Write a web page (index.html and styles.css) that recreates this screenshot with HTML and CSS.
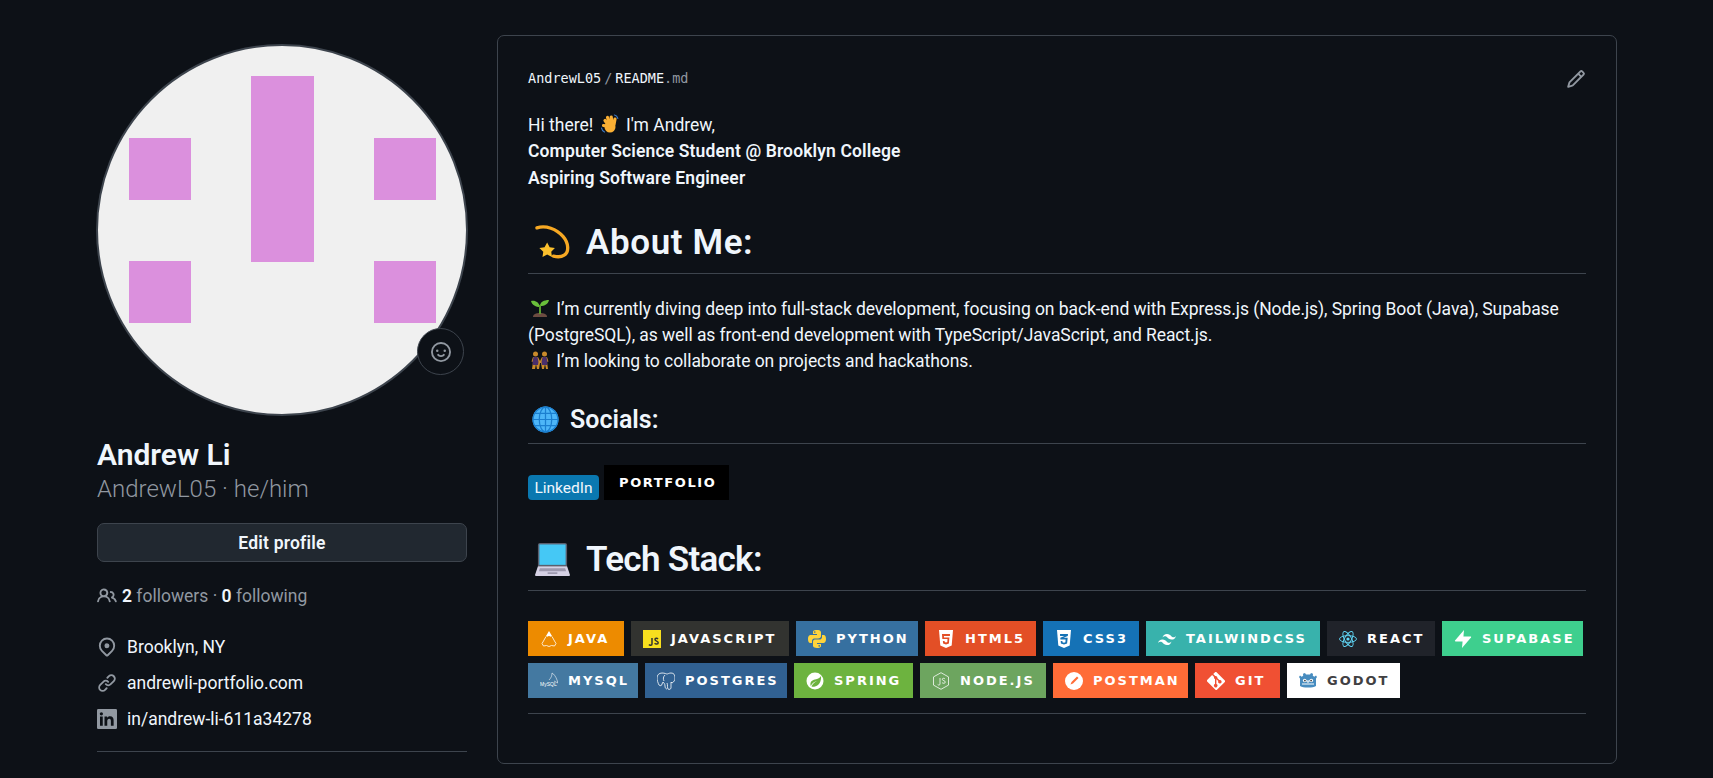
FILE: index.html
```html
<!DOCTYPE html>
<html>
<head>
    <title>AndrewL05</title>
    <link rel="stylesheet" href="styles.css">
</head>
<body>
    <div class="page">
        <aside class="sidebar">
            <div class="avatar-wrap">
                <svg class="avatar" viewBox="0 0 370 370">
                    <circle cx="185" cy="185" r="185" fill="#f0f0f0"/>
                    <g fill="#db90dd">
                        <rect x="32" y="93" width="62" height="62"/>
                        <rect x="154" y="31" width="63" height="186"/>
                        <rect x="277" y="93" width="62" height="62"/>
                        <rect x="32" y="216" width="62" height="62"/>
                        <rect x="277" y="216" width="62" height="62"/>
                    </g>
                </svg>
                <div class="status">
                    <svg viewBox="0 0 16 16" width="20" height="20" fill="#9198a1"><path d="M8 0a8 8 0 1 1 0 16A8 8 0 0 1 8 0ZM1.5 8a6.5 6.5 0 1 0 13 0 6.5 6.5 0 0 0-13 0Zm3.82 1.636a.75.75 0 0 1 1.038.175l.007.009c.103.118.22.222.35.31.264.178.683.37 1.285.37.602 0 1.02-.192 1.285-.371.13-.088.247-.192.35-.31l.007-.008a.75.75 0 0 1 1.222.87l-.022-.015c.02.013.021.015.021.015v.001l-.001.002-.002.003-.005.007-.014.019a2.066 2.066 0 0 1-.184.213c-.16.166-.338.316-.53.445-.63.418-1.37.638-2.127.629-.946 0-1.652-.308-2.126-.63a3.331 3.331 0 0 1-.715-.657l-.014-.02-.005-.006-.002-.003v-.002h-.001l.613-.432-.614.43a.75.75 0 0 1 .183-1.044ZM12 7a1 1 0 1 1-2 0 1 1 0 0 1 2 0ZM5 8a1 1 0 1 1 0-2 1 1 0 0 1 0 2Z"/></svg>
                </div>
            </div>
            <h1 class="name">Andrew Li</h1>
            <div class="login">AndrewL05 · he/him</div>
            <button class="edit-btn">Edit profile</button>
            <div class="follow">
                <svg viewBox="0 0 16 16" width="20" height="20" fill="#9198a1"><path d="M2 5.5a3.5 3.5 0 1 1 5.898 2.549 5.508 5.508 0 0 1 3.034 4.084.75.75 0 1 1-1.482.235 4 4 0 0 0-7.9 0 .75.75 0 0 1-1.482-.236A5.507 5.507 0 0 1 3.102 8.05 3.493 3.493 0 0 1 2 5.5ZM11 4a3.001 3.001 0 0 1 2.22 5.018 5.01 5.01 0 0 1 2.56 3.012.749.749 0 0 1-.885.954.752.752 0 0 1-.549-.514 3.507 3.507 0 0 0-2.522-2.372.75.75 0 0 1-.574-.73v-.352a.75.75 0 0 1 .416-.672A1.5 1.5 0 0 0 11 5.5.75.75 0 0 1 11 4Zm-5.5-.5a2 2 0 1 0-.001 3.999A2 2 0 0 0 5.5 3.5Z"/></svg>
                <span><b>2</b> followers · <b>0</b> following</span>
            </div>
            <ul class="details">
                <li>
                    <svg viewBox="0 0 16 16" width="20" height="20" fill="#9198a1"><path d="m12.596 11.596-3.535 3.536a1.5 1.5 0 0 1-2.122 0l-3.535-3.536a6.5 6.5 0 1 1 9.192-9.193 6.5 6.5 0 0 1 0 9.193Zm-1.06-8.132v-.001a5 5 0 1 0-7.072 7.072L8 14.07l3.536-3.534a5 5 0 0 0 0-7.072ZM8 9a2 2 0 1 1-.001-3.999A2 2 0 0 1 8 9Z"/></svg>
                    Brooklyn, NY
                </li>
                <li>
                    <svg viewBox="0 0 16 16" width="20" height="20" fill="#9198a1"><path d="m7.775 3.275 1.25-1.25a3.5 3.5 0 1 1 4.95 4.95l-2.5 2.5a3.5 3.5 0 0 1-4.95 0 .751.751 0 0 1 .018-1.042.751.751 0 0 1 1.042-.018 1.998 1.998 0 0 0 2.83 0l2.5-2.5a2.002 2.002 0 0 0-2.83-2.83l-1.25 1.25a.751.751 0 0 1-1.042-.018.751.751 0 0 1-.018-1.042Zm-4.69 9.64a1.998 1.998 0 0 0 2.83 0l1.25-1.25a.751.751 0 0 1 1.042.018.751.751 0 0 1 .018 1.042l-1.25 1.25a3.5 3.5 0 1 1-4.95-4.95l2.5-2.5a3.5 3.5 0 0 1 4.95 0 .751.751 0 0 1-.018 1.042.751.751 0 0 1-1.042.018 1.998 1.998 0 0 0-2.83 0l-2.5 2.5a1.998 1.998 0 0 0 0 2.83Z"/></svg>
                    andrewli-portfolio.com
                </li>
                <li>
                    <svg viewBox="0 0 16 16" width="20" height="20"><rect width="16" height="16" rx="1" fill="#9198a1"/><path fill="#0d1117" d="M2.4 6h2.2v7.4H2.4zM3.5 2.5a1.3 1.3 0 1 1 0 2.6 1.3 1.3 0 0 1 0-2.6zM6 6h2.1v1c.4-.7 1.2-1.2 2.3-1.2 2.2 0 2.9 1.3 2.9 3.4v4.2h-2.2V9.7c0-1-.2-1.9-1.3-1.9S8.200 8.600 8.200 9.700v3.700H6z"/></svg>
                    in/andrew-li-611a34278
                </li>
            </ul>
            <hr class="side-rule">
        </aside>

        <main class="readme">
            <div class="readme-head">
                <div class="crumbs">AndrewL05<span class="slash">/</span>README<span class="ext">.md</span></div>
                <svg class="edit-icon" viewBox="0 0 16 16" width="20" height="20" fill="#9198a1"><path d="M11.013 1.427a1.75 1.75 0 0 1 2.474 0l1.086 1.086a1.75 1.75 0 0 1 0 2.474l-8.61 8.61c-.21.21-.47.364-.756.445l-3.251.93a.75.75 0 0 1-.927-.928l.929-3.25c.081-.286.235-.547.445-.758l8.61-8.61Zm.176 4.823L9.75 4.81l-6.286 6.287a.253.253 0 0 0-.064.108l-.558 1.953 1.953-.558a.253.253 0 0 0 .108-.064Zm1.238-3.763a.25.25 0 0 0-.354 0L10.811 3.75l1.439 1.44 1.263-1.263a.25.25 0 0 0 0-.354Z"/></svg>
            </div>

            <p class="intro">
                Hi there!
                <svg class="emoji" viewBox="0 0 20 20"><g stroke="#fbb034" stroke-width="3.200" stroke-linecap="round"><path d="M9 12L5 6.500M10 10L7.500 3.500M12 9.500L11.200 3M14 10.500L15 5M7 12l-3.500-.5"/></g><circle cx="10" cy="13" r="5.500" fill="#fbb034"/><path fill="none" stroke="#3b78c4" stroke-width="1.200" stroke-linecap="round" d="M14.500 1c1.500.4 2.800 1.500 3.300 3.300M1.500 14c.3 1.800 1.300 3.200 3 4"/></svg>
                I'm Andrew,<br>
                <b>Computer Science Student @ Brooklyn College</b><br>
                <b>Aspiring Software Engineer</b>
            </p>

            <h2 class="heading">
                <svg class="emoji-lg" viewBox="0 0 36 36"><path fill="none" stroke="#f6a823" stroke-width="3.400" stroke-linecap="round" d="M2 3c9-3 20 1 27 9 6 7 6 16 1 19-3 2-7 2-11 1"/><path fill="#fbc02d" d="M12.500 18l2.600 4.800 5.400.9-3.800 3.800.8 5.400-5-2.500-4.800 2.600.8-5.400L4.500 23.700l5.300-.9z"/></svg>
                About Me:
            </h2>

            <p class="about">
                <svg class="emoji" viewBox="0 0 20 20"><path fill="#6d4c41" d="M3 19c0-3 3-4 7-4s7 1 7 4z"/><path fill="#6abf3b" d="M10 9C9 4 5 2 1 3c1 4 5 6 9 6zM10 8c0-4 4-6 9-6-1 4-4 6-9 6z"/><rect x="9" y="7" width="2" height="9" fill="#5a9e2f"/></svg>
                I’m currently diving deep into full-stack development, focusing on back-end with Express.js (Node.js), Spring Boot (Java), Supabase (PostgreSQL), as well as front-end development with TypeScript/JavaScript, and React.js.<br>
                <svg class="emoji" viewBox="0 0 20 20"><g fill="#c98a2b"><circle cx="5.500" cy="4" r="2.500"/><circle cx="14.500" cy="4" r="2.500"/><path d="M2 19l1-7-1.500-.5L3 7h5l2 4 2-4h5l1.500 4.500L17 12l1 7h-2l-1-5-1 5h-2l-1-6-1 0-1 6H7l-1-5-1 5z"/></g><path fill="#4a2f6b" d="M3.500 7h4l1 5-.5 3H3l-.5-3zM12.500 7h4l1 5-.5 3h-5l-.5-3z"/></svg>
                I’m looking to collaborate on projects and hackathons.
            </p>

            <h3 class="subheading">
                <svg class="emoji-md" viewBox="0 0 26 26"><circle cx="13" cy="13" r="12.500" fill="#4db6f8"/><g fill="none" stroke="#1b7fd0" stroke-width="1.200"><circle cx="13" cy="13" r="12"/><ellipse cx="13" cy="13" rx="6" ry="12"/><path d="M13 1v24M1 13h24M3 7h20M3 19h20"/></g></svg>
                Socials:
            </h3>

            <div class="socials">
                <span class="linkedin">LinkedIn</span>
                <span class="badge badge-portfolio"><span class="badge-text">PORTFOLIO</span></span>
            </div>

            <h2 class="heading heading-tech">
                <svg class="emoji-lg" viewBox="0 0 36 36"><path fill="#5a5f6e" d="M5 1h26c1 0 2 1 2 2v22H3V3c0-1 1-2 2-2z"/><rect x="4.500" y="2.500" width="27" height="21" fill="#45c8f5"/><path fill="#d5d1e4" d="M3 25h30l3 9c0 1-1 1-1 1H1s-1 0-1-1z"/><path fill="#9d99ae" d="M5 27h26l1 3H4zM13 31h10v2H13z"/></svg>
                Tech Stack:
            </h2>

            <div class="badges">
                <span class="badge badge-java">
                    <svg class="badge-icon" viewBox="0 0 18 18" fill="none" stroke="#fff" stroke-opacity=".8"><path fill="#fff" stroke="none" d="M9 1l3 5-1.200.7a3 3 0 0 0-3.600 0L6 6z"/><path d="M6 6.500L3.500 11 2 13.500l1.500 2.500 3-.5 2.500 1 2.500-1 3 .5 1.500-2.500-1.500-2.500L12 6.500"/></svg>
                    <span class="badge-text">JAVA</span>
                </span>
                <span class="badge badge-js">
                    <svg class="badge-icon" viewBox="0 0 18 18"><rect width="18" height="18" fill="#f7df1e"/><path fill="none" stroke="#323330" stroke-width="1.500" d="M9 8v6c0 1.500-2.300 1.700-3 .5M15 9c-.8-1-3-1-3 .5 0 2 3.200 1.300 3.200 3.200 0 1.700-2.500 1.800-3.600.6"/></svg>
                    <span class="badge-text">JAVASCRIPT</span>
                </span>
                <span class="badge badge-python">
                    <svg class="badge-icon" viewBox="0 0 18 18" fill="#ffd43b"><path d="M9 0C5 0 5 1.700 5 1.700V4h4v1H3S0 4.700 0 9s2.600 4 2.600 4H4v-2s0-2.600 2.600-2.600h4s2.400 0 2.400-2.300V2.400S13.300 0 9 0zM6.800 1.300a.8.8 0 1 1 0 1.600.8.8 0 0 1 0-1.600z"/><path d="M9 18c4 0 4-1.700 4-1.700V14H9v-1h6s3 .3 3-4-2.600-4-2.600-4H14v2s0 2.600-2.600 2.600h-4S5 9.600 5 11.900v3.700S4.700 18 9 18zm2.200-1.300a.8.8 0 1 1 0-1.600.8.8 0 0 1 0 1.600z"/></svg>
                    <span class="badge-text">PYTHON</span>
                </span>
                <span class="badge badge-html">
                    <svg class="badge-icon" viewBox="0 0 18 18"><path fill="#fff" d="M2 0h14l-1.300 15.500L9 18l-5.700-2.500z"/><path fill="#e34f26" d="M13 4H5l.3 5h5.200l-.2 3-1.300.5-1.300-.5-.1-1H5.900l.2 2.500L9 14.500l2.900-1 .5-6H7l-.1-1.500h6z"/></svg>
                    <span class="badge-text">HTML5</span>
                </span>
                <span class="badge badge-css">
                    <svg class="badge-icon" viewBox="0 0 18 18"><path fill="#fff" d="M2 0h14l-1.300 15.500L9 18l-5.700-2.500z"/><path fill="#1572b6" d="M5 4h8l-.2 2L8.500 7.700h4.200l-.6 5.800L9 14.500l-3.100-1-.2-2.500h1.700l.1 1.200L9 12.800l1.400-.5.200-2.800H5.400l-.1-1.800 4.100-1.700H5.100z"/></svg>
                    <span class="badge-text">CSS3</span>
                </span>
                <span class="badge badge-tailwind">
                    <svg class="badge-icon" viewBox="0 0 18 18" fill="#fff"><path d="M9 4C6.600 4 5.100 5.200 4.500 7.600c.9-1.200 2-1.700 3.200-1.300.7.200 1.200.700 1.700 1.200.9.900 1.900 2 4.100 2 2.400 0 3.900-1.200 4.500-3.600-.9 1.200-2 1.700-3.200 1.300-.7-.2-1.200-.7-1.700-1.200C12.200 5.100 11.200 4 9 4zM4.500 9.500C2.100 9.500.600 10.700 0 13.100c.9-1.200 2-1.700 3.200-1.300.7.200 1.200.7 1.700 1.200.9.900 1.900 2 4.100 2 2.400 0 3.900-1.200 4.500-3.600-.9 1.200-2 1.700-3.200 1.300-.7-.2-1.200-.7-1.700-1.200-.9-.9-1.900-2-4.100-2z"/></svg>
                    <span class="badge-text">TAILWINDCSS</span>
                </span>
                <span class="badge badge-react">
                    <svg class="badge-icon" viewBox="0 0 18 18" fill="none" stroke="#61dafb" stroke-width=".9"><circle cx="9" cy="9" r="1.600" fill="#61dafb" stroke="none"/><ellipse cx="9" cy="9" rx="8.500" ry="3.400"/><ellipse cx="9" cy="9" rx="8.500" ry="3.400" transform="rotate(60 9 9)"/><ellipse cx="9" cy="9" rx="8.500" ry="3.400" transform="rotate(120 9 9)"/></svg>
                    <span class="badge-text">REACT</span>
                </span>
                <span class="badge badge-supabase">
                    <svg class="badge-icon" viewBox="0 0 18 18" fill="#fff"><path d="M10 0L1 10.500c-.3.400 0 .9.500.9H9z"/><path d="M8 18l9-10.500c.3-.4 0-.9-.5-.9H9z"/></svg>
                    <span class="badge-text">SUPABASE</span>
                </span>
                <span class="badge badge-mysql">
                    <svg class="badge-icon" viewBox="0 0 18 18" fill="none" stroke="#fff" stroke-opacity=".8" stroke-width=".7"><path d="M9 8c2-2 3-4 3-7 2 1 4 4 5 7l1 3-4-2"/><text class="mysql-word" x="0" y="14" fill="#fff" stroke="none">MySQL</text></svg>
                    <span class="badge-text">MYSQL</span>
                </span>
                <span class="badge badge-postgres">
                    <svg class="badge-icon" viewBox="0 0 18 18" fill="none" stroke="#fff" stroke-width=".8"><path d="M5 1c3 0 4 1 5 1s2-1 4-1c3 0 4 2 4 5 0 2-1 4-3 5l-1-1v6c0 1-2 2-3 1s0-4-1-6M5 1C2 1 0 3 0 6c0 2 1 5 2 7 1 1 3 1 3-1l1-2c1 1 2 2 2 4 0 2 1 3 2 3"/><path d="M8 3c-2 2-2 4-1 6"/></svg>
                    <span class="badge-text">POSTGRES</span>
                </span>
                <span class="badge badge-spring">
                    <svg class="badge-icon" viewBox="0 0 18 18"><circle cx="9" cy="9" r="8.500" fill="#fff"/><path fill="#6db33f" d="M15 4c-1 2-3 3-6 3.500S4 10 4.500 13c0 .4.200.8.400 1.100 1-2.500 3.100-4.500 6.100-5.100-2.500 1-4.500 3-5.500 5.500 1 .3 2.500.3 3.500 0 4-.7 6.500-5 6-10.500z"/></svg>
                    <span class="badge-text">SPRING</span>
                </span>
                <span class="badge badge-node">
                    <svg class="badge-icon" viewBox="0 0 18 18" fill="none" stroke="#fff" stroke-opacity=".85" stroke-width=".9"><path d="M9 .7l7.500 4.200v8.200L9 17.300l-7.500-4.200V4.900z"/><path d="M8 6v6c0 1.300-1.700 1.300-2.300.5M13 7c-.7-1-2.700-1-2.700.3 0 1.700 3 1 3 2.800 0 1.500-2.400 1.500-3.300.5"/></svg>
                    <span class="badge-text">NODE.JS</span>
                </span>
                <span class="badge badge-postman">
                    <svg class="badge-icon" viewBox="0 0 18 18"><circle cx="9" cy="9" r="9" fill="#fff"/><path fill="#ff6c37" d="M12 4.500l1.500 1.500-5.500 5.500-2.500 1 1-2.500z"/></svg>
                    <span class="badge-text">POSTMAN</span>
                </span>
                <span class="badge badge-git">
                    <svg class="badge-icon" viewBox="0 0 18 18"><path fill="#fff" d="M17.600 8.200L9.800.4a1.400 1.400 0 0 0-2 0L6.200 2l2 2a1.700 1.700 0 0 1 2.100 2.100l2 2a1.700 1.700 0 1 1-1 1L9.400 7.200v4.900a1.700 1.700 0 1 1-1.400 0V7.100a1.700 1.700 0 0 1-.9-2.200L5.100 3 .4 7.800a1.400 1.400 0 0 0 0 2l7.800 7.800a1.400 1.400 0 0 0 2 0l7.400-7.400a1.400 1.400 0 0 0 0-2z"/></svg>
                    <span class="badge-text">GIT</span>
                </span>
                <span class="badge badge-godot">
                    <svg class="badge-icon" viewBox="0 0 18 18"><path fill="#478cbf" d="M6 1l1 1.500h4L12 1l2 .7-.2 2 1.500 1 1.700-1.200 1 1.500-1 1.500V14c-2 1-4 1.500-8 1.500S3 15 1 14V6.500L0 5l1-1.500L2.700 4.700l1.500-1L4 1.700z"/><circle cx="5.700" cy="8.500" r="1.800" fill="#fff"/><circle cx="12.300" cy="8.500" r="1.800" fill="#fff"/><circle cx="5.900" cy="8.600" r=".9" fill="#414042"/><circle cx="12.100" cy="8.600" r=".9" fill="#414042"/><path stroke="#fff" stroke-width="1" fill="none" d="M3 12h12M8 8v2h2V8"/></svg>
                    <span class="badge-text">GODOT</span>
                </span>
            </div>
            <hr class="readme-rule">
        </main>
    </div>
</body>
</html>
```

FILE: styles.css
```css
body {
    margin: 0;
    background: #0d1117;
    color: #f0f6fc;
    font-family: Roboto, "Noto Sans", sans-serif;
    font-size: 17.5px;
    height: 778px;
    overflow: hidden;
}

.page {
    display: flex;
    gap: 30px;
    padding: 35px 0 0 97px;
}

.sidebar {
    width: 370px;
    flex-shrink: 0;
}

.avatar-wrap {
    position: relative;
    width: 370px;
    height: 370px;
    margin-top: 10px;
}

.avatar {
    display: block;
    width: 370px;
    height: 370px;
    border-radius: 50%;
    outline: 2px solid #3d444d;
    outline-offset: -1px;
}

.status {
    position: absolute;
    right: 3px;
    bottom: 40px;
    box-sizing: border-box;
    width: 47px;
    height: 47px;
    border-radius: 50%;
    border: 1px solid #3d444d;
    background: #0d1117;
    display: flex;
    align-items: center;
    justify-content: center;
}

.name {
    margin: 22px 0 0;
    font-size: 30px;
    line-height: 35px;
    font-weight: 600;
}

.login {
    margin-top: 2px;
    font-size: 24px;
    line-height: 31px;
    font-weight: 300;
    color: #9198a1;
}

.edit-btn {
    display: block;
    width: 100%;
    height: 39px;
    margin-top: 18px;
    border: 1px solid #3d444d;
    border-radius: 7px;
    background: #212830;
    color: #f0f6fc;
    font-family: inherit;
    font-size: 17.5px;
    font-weight: 600;
    letter-spacing: .2px;
}

.follow {
    display: flex;
    align-items: center;
    gap: 5px;
    margin-top: 21px;
    color: #9198a1;
    line-height: 26px;
}

.follow b {
    color: #f0f6fc;
    font-weight: 600;
}

.details {
    list-style: none;
    margin: 25px 0 0;
    padding: 0;
}

.details li {
    display: flex;
    align-items: center;
    gap: 10px;
    line-height: 26px;
    margin-bottom: 10px;
}

.side-rule {
    border: none;
    border-top: 1px solid #3d444d;
    margin: 19px 0 0;
}

.readme {
    width: 1120px;
    height: 729px;
    box-sizing: border-box;
    border: 1px solid #3d444d;
    border-radius: 7px;
    padding: 32px 30px 0;
}

.readme-head {
    display: flex;
    align-items: center;
    justify-content: space-between;
    height: 20px;
}

.edit-icon {
    margin-top: 2px;
}

.crumbs {
    font-family: "DejaVu Sans Mono", monospace;
    font-size: 13.5px;
}

.slash {
    color: #9198a1;
    margin: 0 3px;
}

.ext {
    color: #9198a1;
}

.intro {
    margin: 24px 0 0;
    line-height: 26.25px;
}

.intro b {
    font-weight: 600;
    letter-spacing: .13px;
}

.emoji {
    width: 20px;
    height: 20px;
    vertical-align: -3px;
    margin: 0 2px;
}

.heading {
    display: flex;
    align-items: center;
    gap: 16px;
    margin: 29px 0 0;
    padding: 0 0 8px 7px;
    height: 45px;
    border-bottom: 1px solid #3d444d;
    font-size: 35px;
    font-weight: 600;
    letter-spacing: .6px;
}

.emoji-lg {
    width: 35px;
    height: 35px;
    flex-shrink: 0;
}

.about {
    margin: 22px 0 0;
    line-height: 26.25px;
    letter-spacing: -.07px;
}

.subheading {
    display: flex;
    align-items: center;
    gap: 11px;
    margin: 27.5px 0 0;
    height: 35px;
    padding: 0 0 6px 4px;
    border-bottom: 1px solid #3d444d;
    font-size: 25px;
    font-weight: 600;
}

.emoji-md {
    width: 27px;
    height: 27px;
    flex-shrink: 0;
}

.socials {
    display: flex;
    align-items: flex-end;
    gap: 5px;
    margin-top: 21px;
}

.linkedin {
    display: flex;
    align-items: center;
    justify-content: center;
    width: 71px;
    height: 25px;
    border-radius: 4px;
    background: #0a78b0;
    font-size: 15.5px;
}

.heading.heading-tech {
    margin-top: 36.5px;
    letter-spacing: -.7px;
}

.badges {
    display: flex;
    flex-wrap: wrap;
    gap: 7px;
    margin-top: 30.5px;
    width: 1075px;
}

.badge {
    display: flex;
    align-items: center;
    gap: 10px;
    box-sizing: border-box;
    height: 35px;
    padding-left: 12px;
    font-family: "DejaVu Sans", sans-serif;
    font-size: 13px;
    font-weight: 700;
    letter-spacing: 2px;
    color: #fff;
    white-space: nowrap;
}

.badge-icon {
    width: 18px;
    height: 18px;
    flex-shrink: 0;
}

.mysql-word {
    font-family: "Liberation Sans", sans-serif;
    font-size: 5px;
    font-weight: 400;
    letter-spacing: 0;
}

.badge-portfolio { width: 125px; background: #000; padding-left: 15px; letter-spacing: 1.6px; }
.badge-java { width: 96px; background: #ed8b00; }
.badge-js { width: 158px; background: #323330; }
.badge-python { width: 122px; background: #3670a0; }
.badge-html { width: 111px; background: #e34f26; }
.badge-css { width: 96px; background: #1572b6; }
.badge-tailwind { width: 174px; background: #38b2ac; }
.badge-react { width: 108px; background: #20232a; }
.badge-supabase { width: 141px; background: #3ecf8e; }
.badge-mysql { width: 110px; background: #4479a1; }
.badge-postgres { width: 142px; background: #316192; }
.badge-spring { width: 119px; background: #6db33f; }
.badge-node { width: 126px; background: #6da55f; }
.badge-postman { width: 135px; background: #ff6c37; }
.badge-git { width: 85px; background: #f05033; }
.badge-godot { width: 113px; background: #fff; color: #414042; }

.readme-rule {
    border: none;
    border-top: 1px solid #3d444d;
    margin: 15px 0 0;
}
```
